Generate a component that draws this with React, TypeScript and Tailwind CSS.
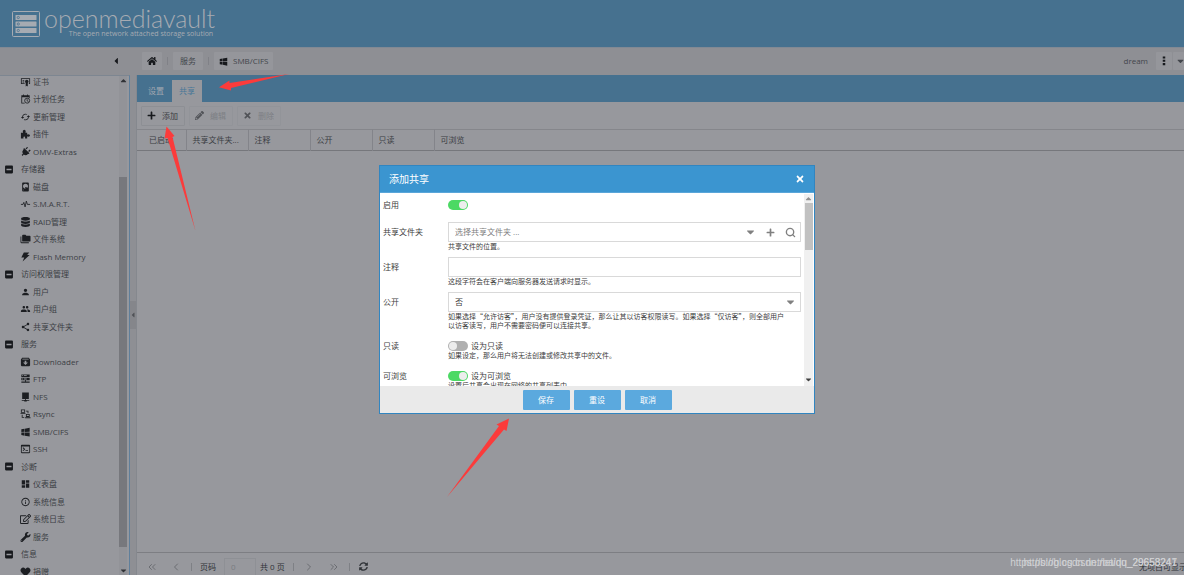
import React from 'react';
import { FaCaretDown, FaCaretLeft, FaCaretUp, FaDatabase, FaHeart, FaHome, FaMinusSquare, FaPencilAlt, FaPlug, FaPlus, FaRegEdit, FaSyncAlt, FaTimes, FaWrench } from 'react-icons/fa';
import { MdCached, MdDashboard, MdInfoOutline, MdPeople, MdPerson, MdShare } from 'react-icons/md';
import { ChevronLeft, ChevronRight, ChevronsLeft, ChevronsRight, Search } from 'lucide-react';

type IconProps = { className?: string };
type IconType = React.ComponentType<IconProps>;

// Custom glyphs on a 24px grid
const glyph = (body: React.ReactNode): IconType => ({ className }) => (
    <svg viewBox="0 0 24 24" fill="currentColor" className={className} aria-hidden="true">
        {body}
    </svg>
);

const WindowsIcon = glyph(
    <path d="M2,12V5.500L9.500,4V11.600L2,12M22,2V11.600L10.500,11.800V3.900L22,2M2,13L9.500,13.100V20.700L2,19.200V13M22,13.200V23L10.500,20.900V13.100L22,13.200Z" />
);
const CertificateIcon = glyph(
    <>
        <path d="M1 3h22v14h-3v-2h1V5H3v10h7v2H1z" />
        <path d="M5 7h4v2H5zM5 11h4v2H5z" />
        <circle cx="15" cy="11" r="4.2" />
        <path d="M12.500 14h5v9L15 21l-2.500 2z" />
    </>
);
const CalendarClockIcon = glyph(
    <>
        <path d="M2 3h4V1h2v2h8V1h2v2h4v7h-2V8H4v13h6v2H2z" />
        <circle cx="16" cy="16" r="6" fill="none" stroke="currentColor" strokeWidth="2" />
        <path d="M15 12h1.600v3.700l2.900 1.700-.8 1.400-3.700-2.200z" />
    </>
);
const PluginIcon = glyph(
    <path d="M1 9h5V7.500a3.500 3.500 0 1 1 6 0V9h4v4h2a3 3 0 1 1 0 5h-2v5h-5v-3a2 2 0 0 0-4 0v3H1z" />
);
const HarddiskIcon = glyph(
    <path
        fillRule="evenodd"
        d="M6,1H18A2,2 0 0,1 20,3V21A2,2 0 0,1 18,23H6A2,2 0 0,1 4,21V3A2,2 0 0,1 6,1M12,4A6,6 0 0,0 6,10C6,13.31 8.69,16 12.1,16L11.22,13.77C10.95,13.29 11.11,12.68 11.59,12.4L12.45,11.9C12.93,11.63 13.54,11.79 13.82,12.27L15.74,14.69C17.12,13.59 18,11.9 18,10A6,6 0 0,0 12,4M7,18A1,1 0 0,0 6,19A1,1 0 0,0 7,20A1,1 0 0,0 8,19A1,1 0 0,0 7,18Z"
    />
);
const PulseIcon = glyph(
    <path d="M1 13h5l2-5 3 11 3-14 2.500 8H23" fill="none" stroke="currentColor" strokeWidth="2" strokeLinejoin="round" />
);
const FoldersIcon = glyph(
    <path d="M22,4H14L12,2H6A2,2 0 0,0 4,4V16A2,2 0 0,0 6,18H22A2,2 0 0,0 24,16V6A2,2 0 0,0 22,4M2,6H0V20A2,2 0 0,0 2,22H20V20H2V6Z" />
);
const BoltIcon = glyph(<path d="M8 1h13l-5 6h6L5 23l4-10H2z" />);
const DownloaderIcon = glyph(
    <path fillRule="evenodd" d="M4 2h16l3 4v14a2 2 0 0 1-2 2H3a2 2 0 0 1-2-2V6zM5 4L4 6h16l-1-2zM10 9v4H6l6 6 6-6h-4V9z" />
);
const FtpIcon = glyph(
    <path fillRule="evenodd" d="M2 1h20v6H2zM2 9h20v6H2zM4 3v2h2V3zM8 3v2h7V3zM4 11v2h2v-2zM8 11v2h7v-2zM11 15h2v3h9v3H2v-3h9z" />
);
const NfsIcon = glyph(<path d="M4 1h16v16h-7v2h8v2h-6v2H9v-2H3v-2h8v-2H4z" />);
const RsyncIcon = glyph(
    <path fillRule="evenodd" d="M1 1h10v8H1zM3 3v4h6V3zM0 10h12v2H0zM13 12h9v7h-9zM15 14v3h5v-3zM11 20h13v2H11zM13 4h6v6h-2V6h-4zM3 14h2v5h4v2H3z" />
);
const TerminalIcon = glyph(
    <path fillRule="evenodd" d="M3 2h18a2 2 0 0 1 2 2v16a2 2 0 0 1-2 2H3a2 2 0 0 1-2-2V4a2 2 0 0 1 2-2zM3 6v14h18V6zM5 9.500l1.500-1.500 5 4.500-5 4.500L5 15.500l3.500-3zM12 15h6v2h-6z" />
);
const DotsIcon = glyph(<path d="M9 1h6v5H9zM9 9h6v5H9zM9 17h6v5H9z" />);
const PlugIcon: IconType = ({ className }) => <FaPlug className={`${className} rotate-45`} />;

type TreeItem = { label: string; icon?: IconType };

const tree: TreeItem[] = [
    { label: '证书', icon: CertificateIcon },
    { label: '计划任务', icon: CalendarClockIcon },
    { label: '更新管理', icon: MdCached },
    { label: '插件', icon: PluginIcon },
    { label: 'OMV-Extras', icon: PlugIcon },
    { label: '存储器' },
    { label: '磁盘', icon: HarddiskIcon },
    { label: 'S.M.A.R.T.', icon: PulseIcon },
    { label: 'RAID管理', icon: FaDatabase },
    { label: '文件系统', icon: FoldersIcon },
    { label: 'Flash Memory', icon: BoltIcon },
    { label: '访问权限管理' },
    { label: '用户', icon: MdPerson },
    { label: '用户组', icon: MdPeople },
    { label: '共享文件夹', icon: MdShare },
    { label: '服务' },
    { label: 'Downloader', icon: DownloaderIcon },
    { label: 'FTP', icon: FtpIcon },
    { label: 'NFS', icon: NfsIcon },
    { label: 'Rsync', icon: RsyncIcon },
    { label: 'SMB/CIFS', icon: WindowsIcon },
    { label: 'SSH', icon: TerminalIcon },
    { label: '诊断' },
    { label: '仪表盘', icon: MdDashboard },
    { label: '系统信息', icon: MdInfoOutline },
    { label: '系统日志', icon: FaRegEdit },
    { label: '服务', icon: FaWrench },
    { label: '信息' },
    { label: '捐赠', icon: FaHeart },
];

const columns = ['共享文件夹...', '注释', '公开', '只读'];

const Header = () => (
    <header className="h-[47px] shrink-0 bg-[#46718f] flex items-center pl-3 text-[#a6abb2]">
        <svg viewBox="0 0 28 26" className="w-7 h-[26px]" fill="none" stroke="currentColor" aria-hidden="true">
            <rect x="0.500" y="0.500" width="27" height="25" rx="1" />
            {[4, 10.500, 17].map((y) => (
                <g key={y}>
                    <rect x="3.500" y={y} width="21" height="5" rx="0.500" fill="currentColor" stroke="none" />
                    <circle cx="6.300" cy={y + 2.500} r="1.100" stroke="#46718f" strokeWidth="0.800" />
                </g>
            ))}
        </svg>
        <div className="flex flex-col items-end pl-1 pb-1">
            <h1 className="font-['Lato'] font-light text-[25px] leading-6">openmediavault</h1>
            <p className="font-['Open_Sans'] text-[7px] leading-[7px] pr-0.5">The open network attached storage solution</p>
        </div>
    </header>
);

const barButton = 'h-[18px] flex items-center gap-[5px] rounded-[1px] bg-[#95969b]';

const Breadcrumbs = () => (
    <nav className="h-7 shrink-0 bg-[#8e8f94] border-t border-[#818994] flex items-center pb-px text-[#43464c]">
        <div className="w-[142px] flex justify-end pr-[22px]">
            <button aria-label="collapse" className="text-[#17191d]"><FaCaretLeft className="w-2 h-[10px]" /></button>
        </div>
        <a href="#home" aria-label="home" className={`${barButton} px-[5px] text-[#17191d]`}><FaHome className="w-[10px] h-[10px]" /></a>
        <span className="w-px h-2 bg-[#808187] mx-[5px]" />
        <a href="#services" className={`${barButton} px-[7px]`}>服务</a>
        <span className="w-px h-2 bg-[#808187] mx-[5px]" />
        <a href="#smb" className={`${barButton} px-[5px]`}>
            <WindowsIcon className="w-[9px] h-[9px] text-[#17191d]" />
            SMB/CIFS
        </a>
        <span className="ml-auto mr-2">dream</span>
        <button aria-label="menu" className={`${barButton} px-[3px] text-[#17191d]`}><DotsIcon className="w-[10px] h-[10px]" /></button>
        <button aria-label="more" className={`${barButton} ml-px pl-1`}><FaCaretDown className="w-[7px] h-[10px]" /></button>
    </nav>
);

const Sidebar = () => (
    <aside className="w-[130px] shrink-0 flex border-t border-r border-t-[#7d8691] border-r-[#5f7f9b] overflow-hidden">
        <ul className="flex-1 min-w-0 h-0 -mt-[3px]">
            {tree.map(({ label, icon: Icon }, i) => (
                <li key={i} className="h-[17px] even:h-[18px]">
                    <a href="#tree" className="h-full flex items-center text-[#3b3e44] whitespace-nowrap">
                        {Icon ? (
                            <span className="w-[33px] pl-5 flex"><Icon className="w-[11px] h-[10px] text-[#1c1e22]" /></span>
                        ) : (
                            <span className="w-[21px] pl-[5px] flex"><FaMinusSquare className="w-2 h-[9px] text-[#17191d]" /></span>
                        )}
                        {label}
                    </a>
                </li>
            ))}
        </ul>
        <div className="w-2 mr-0.5 flex flex-col items-center bg-[#929398] text-[#303236]">
            <FaCaretUp className="w-[7px] h-[9px]" />
            <div className="grow-[92]" />
            <div className="w-full grow-[369] bg-[#77787d]" />
            <div className="grow-[19]" />
            <FaCaretDown className="w-[7px] h-[9px]" />
        </div>
    </aside>
);

const Divider = () => <span className="w-px h-2 bg-[#7e8085]" />;

const ToolButton = ({ icon: Icon, label, disabled }: { icon: IconType; label: string; disabled?: boolean }) => (
    <button
        disabled={disabled}
        className="w-11 h-5 flex items-center gap-[6px] pl-[5px] border border-[#8d8f94] rounded-[1px] text-[#3b3e44] disabled:text-[#7d7f84] disabled:border-[#929499]"
    >
        <Icon className={disabled ? 'w-[9px] h-[9px] text-[#505257]' : 'w-[9px] h-[9px] text-[#17191d]'} />
        {label}
    </button>
);

const Panel = () => (
    <main className="flex-1 min-w-0 flex flex-col border-l border-[#85888e]">
        <div className="h-[27px] shrink-0 bg-[#46718f] flex items-end">
            <button className="h-[22px] px-2 ml-[3px] text-[#a1a7af]">设置</button>
            <button className="h-[22px] px-[7px] bg-[#97989d] text-[#477798]">共享</button>
        </div>
        <div className="h-[27px] shrink-0 flex items-center gap-1 pl-1">
            <ToolButton icon={FaPlus} label="添加" />
            <ToolButton icon={FaPencilAlt} label="编辑" disabled />
            <ToolButton icon={FaTimes} label="删除" disabled />
        </div>
        <table className="w-full table-fixed text-left text-[#3b3e44]">
            <thead>
                <tr className="h-[21px] border-y border-t-[#85868b] border-b-[#76777c]">
                    <th className="w-[49px] pl-3 font-normal border-r border-[#83848a] whitespace-nowrap overflow-hidden">已启动</th>
                    {columns.map((name) => (
                        <th key={name} className="w-[62px] pl-1.5 font-normal border-r border-[#83848a] whitespace-nowrap">{name}</th>
                    ))}
                    <th className="pl-1.5 font-normal">可浏览</th>
                </tr>
            </thead>
            <tbody />
        </table>
        <footer className="mt-auto h-[23px] pt-[5px] shrink-0 border-t border-[#7d7e83] flex items-center text-[#6b6d72]">
            <div className="flex items-center gap-3 pl-[9px]">
                <button aria-label="first"><ChevronsLeft className="w-3 h-3" /></button>
                <button aria-label="previous"><ChevronLeft className="w-3 h-3" /></button>
            </div>
            <div className="flex items-center pl-[9px] text-[#303338]">
                <Divider />
                <label htmlFor="page" className="px-2">页码</label>
                <input id="page" defaultValue="0" className="w-8 h-[18px] mr-1 pl-1.5 border border-[#8e9095] text-[#7a7c81] outline-none" />
                <span>共 0 页</span>
            </div>
            <div className="flex items-center gap-[9px] pl-2">
                <Divider />
                <button aria-label="next"><ChevronRight className="w-3 h-3" /></button>
                <button aria-label="last" className="pl-1"><ChevronsRight className="w-3 h-3" /></button>
                <Divider />
                <button aria-label="refresh"><FaSyncAlt className="w-[9px] h-[9px] text-[#303338]" /></button>
            </div>
            <span className="ml-auto w-[45px] overflow-hidden whitespace-nowrap text-[#303338]">无项目可显示</span>
        </footer>
    </main>
);

interface FieldProps {
    id: string;
    label: string;
    help?: string;
    children: React.ReactNode;
}

const Field = ({ id, label, help, children }: FieldProps) => (
    <div className="flex text-[#404040]">
        <label htmlFor={id} className="w-[65px] h-5 shrink-0 flex items-center">{label}</label>
        <div className="flex-1 min-w-0">
            {children}
            {help && <p className="font-['Noto_Sans_CJK_SC',sans-serif] text-[7px] leading-[9px] pr-3">{help}</p>}
        </div>
    </div>
);

const Toggle = ({ id, on, text }: { id: string; on?: boolean; text?: string }) => (
    <div className="h-[15px] pt-[5px] flex items-center gap-[3px]">
        <input
            id={id}
            type="checkbox"
            defaultChecked={on}
            className="appearance-none w-5 h-[10px] rounded-full bg-[#b0b0b0] p-px flex checked:bg-[#4cd964] checked:justify-end before:block before:w-2 before:h-2 before:rounded-full before:bg-[#ededed]"
        />
        {text && <span className="leading-[10px]">{text}</span>}
    </div>
);

const box = 'h-5 w-full border border-[#d9d9d9] bg-white';

const Dialog = () => (
    <div className="absolute inset-0 flex items-center justify-center pl-[10px] pt-1">
        <section role="dialog" aria-label="添加共享" className="w-[436px] border border-[#3185c0] bg-white">
            <div className="h-[27px] flex items-center justify-between px-[9px] bg-[#3b95d0] border-b border-[#5aa6d9] text-white">
                <h2 className="text-[10px]">添加共享</h2>
                <button aria-label="close"><FaTimes className="w-[10px] h-[10px]" /></button>
            </div>
            <div className="h-[193px] flex overflow-hidden">
                <form className="flex-1 min-w-0 h-0 flex flex-col gap-1.5 pt-0.5 px-[3px]">
                    <div className="pb-px"><Field id="enable" label="启用"><Toggle id="enable" on /></Field></div>
                    <Field id="folder" label="共享文件夹" help="共享文件的位置。">
                        <div className={`${box} flex items-center text-[#808080]`}>
                            <input id="folder" placeholder="选择共享文件夹 ..." className="flex-1 min-w-0 pl-1.5 outline-none placeholder:text-[#808080]" />
                            <button type="button" aria-label="open" className="w-5 flex justify-center"><FaCaretDown className="w-[9px] h-3" /></button>
                            <button type="button" aria-label="add" className="w-5 flex justify-center"><FaPlus className="w-[9px] h-[9px]" /></button>
                            <button type="button" aria-label="search" className="w-5 flex justify-center"><Search className="w-[11px] h-[11px]" strokeWidth={3} /></button>
                        </div>
                    </Field>
                    <Field id="comment" label="注释" help="这段字符会在客户端向服务器发送请求时显示。">
                        <input id="comment" className={`${box} block px-1.5 outline-none`} />
                    </Field>
                    <Field
                        id="public"
                        label="公开"
                        help="如果选择“允许访客”，用户没有提供登录凭证，那么让其以访客权限读写。如果选择“仅访客”，则全部用户以访客读写，用户不需要密码便可以连接共享。"
                    >
                        <div className={`${box} flex items-center pr-[5px]`}>
                            <select id="public" className="appearance-none flex-1 h-full pl-1.5 outline-none">
                                <option>否</option>
                            </select>
                            <FaCaretDown className="w-[9px] h-3 text-[#808080]" />
                        </div>
                    </Field>
                    <Field id="readonly" label="只读" help="如果设定，那么用户将无法创建或修改共享中的文件。">
                        <Toggle id="readonly" text="设为只读" />
                    </Field>
                    <Field id="browseable" label="可浏览" help="设置后共享会出现在网络的共享列表中。">
                        <Toggle id="browseable" on text="设为可浏览" />
                    </Field>
                </form>
                <div className="w-[9px] mt-px mr-px flex flex-col items-center bg-[#f0f0f0]">
                    <FaCaretUp className="w-[7px] h-[9px] text-[#909090]" />
                    <div className="w-[8px] h-[47px] bg-[#c1c1c1]" />
                    <FaCaretDown className="w-[7px] h-[9px] text-[#404040] mt-auto mb-0.5" />
                </div>
            </div>
            <div className="h-[27px] flex items-center justify-center gap-1 bg-[#eaeaea]">
                {['保存', '重设', '取消'].map((name) => (
                    <button key={name} className="w-[47px] h-5 rounded-[1px] bg-[#5ba9de] text-white">{name}</button>
                ))}
            </div>
        </section>
    </div>
);

// Hand-drawn pointers over the page
const Arrows = () => (
    <svg className="absolute left-0 top-0 pointer-events-none" width="600" height="520" fill="#fb3b3b" aria-hidden="true">
        <path d="M219 87.300L229.500 80.500L229.500 83L289 74L231 88L231 90.500Z" />
        <path d="M166.500 126.500L174.500 136L172.500 137L195.500 231L167.500 138L164.500 138.500Z" />
        <path d="M509 418.500L506.500 431L504 429.500L447 497L499 426L496.500 424.500Z" />
    </svg>
);

const App: React.FC = () => (
    <div lang="zh-CN" className="relative h-screen flex flex-col overflow-hidden bg-[#97989d] font-['Open_Sans','Noto_Sans_CJK_SC',sans-serif] text-[8px] leading-3">
        <Header />
        <Breadcrumbs />
        <div className="flex-1 min-h-0 flex">
            <Sidebar />
            <div className="w-1.5 shrink-0 bg-[#8e8f94] flex items-center">
                <button aria-label="toggle sidebar" className="w-full h-7 -mt-5 bg-[#85868b] text-[#505257] flex items-center justify-center"><FaCaretLeft className="w-1.5 h-2" /></button>
            </div>
            <Panel />
        </div>
        <Dialog />
        <Arrows />
        <div className="absolute right-[7px] bottom-[6px] grid justify-items-end font-['Liberation_Sans'] text-[10px] leading-3 text-[#cfd0d3]">
            <span className="col-start-1 row-start-1">https://blog.csdn.net/baidu_29653241</span>
            <span className="col-start-1 row-start-1">https://blog.csdn.net/qq_29658247</span>
        </div>
    </div>
);

export default App;
